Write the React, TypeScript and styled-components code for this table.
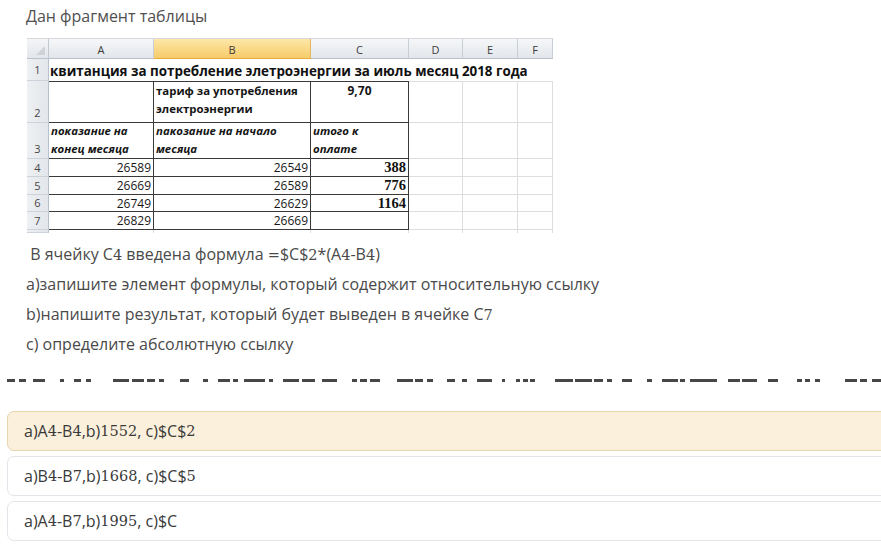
import React from "react";
import styled, { createGlobalStyle, css } from "styled-components";

const Global = createGlobalStyle`
  html, body { margin: 0; padding: 0; background: #fff; }
  body {
    width: 881px; height: 559px; overflow: hidden;
    font-family: "Open Sans", "Noto Sans", sans-serif;
  }
`;

const Page = styled.div`
  display: flex;
  flex-direction: column;
  padding-top: 1px;
`;

const Intro = styled.p`
  margin: 0 0 7px 26px;
  height: 30px;
  font-size: 16px;
  line-height: 30px;
  color: #505050;
`;

/* ---------- spreadsheet ---------- */
const Sheet = styled.div`
  margin-left: 27px;
  width: 526px;
  display: grid;
  grid-template-columns: 22px 105px 157px 98px 54px 55px 35px;
  grid-template-rows: 20px 22px 42px 36px 18px 18px 17px 18px 3px;
  border-top: 1px solid #d6d8db;
  font-family: "Open Sans", "Noto Sans", sans-serif;
  color: #151515;
  overflow: hidden;
`;

const Corner = styled.div`
  position: relative;
  background: linear-gradient(#f4f5f7, #e3e6ea);
  border-right: 1px solid #c3c9d1;
  border-bottom: 1px solid #b8c2ce;
  &::after {
    content: "";
    position: absolute;
    right: 3px;
    bottom: 3px;
    border-left: 9px solid transparent;
    border-bottom: 9px solid #cfd3d8;
  }
`;

const ColHead = styled.div<{ $active?: boolean }>`
  display: flex;
  align-items: center;
  justify-content: center;
  padding-top: 2px;
  box-sizing: border-box;
  font-size: 11px;
  color: #3c3c3c;
  background: linear-gradient(#f6f7f9, #e2e6ea);
  border-right: 1px solid #c8ced6;
  border-bottom: 1px solid #b8c2ce;
  ${(p) =>
    p.$active &&
    css`
      background: linear-gradient(#fde7a8, #f6cc6a);
      border-bottom: 1px solid #e9ad3c;
      border-right: 1px solid #e3b660;
    `}
`;

const RowHead = styled.div<{ $valign?: "center" | "end" }>`
  display: flex;
  justify-content: center;
  align-items: ${(p) => (p.$valign === "end" ? "flex-end" : "center")};
  font-size: 11px;
  line-height: 18px;
  color: #474747;
  background: linear-gradient(90deg, #eef0f3, #e3e6ea);
  border-right: 1px solid #b8c2ce;
  border-bottom: 1px solid #cdd3da;
`;

type CellProps = {
  $dark?: boolean;
  $top?: "dark" | "light";
  $noBottom?: boolean;
  $align?: "left" | "center" | "right";
  $valign?: "start" | "center" | "end";
};

const Cell = styled.div<CellProps>`
  box-sizing: border-box;
  display: flex;
  flex-direction: column;
  justify-content: ${(p) =>
    p.$valign === "start" ? "flex-start" : p.$valign === "end" ? "flex-end" : "center"};
  text-align: ${(p) => p.$align ?? "left"};
  padding: 0 2px;
  border-right: ${(p) => (p.$dark ? "1.5px solid #3a3a3a" : "1px solid #dcdee0")};
  border-bottom: ${(p) =>
    p.$noBottom ? "none" : p.$dark ? "1.5px solid #3a3a3a" : "1px solid #dcdee0"};
  border-top: ${(p) =>
    p.$top === "dark" ? "1.5px solid #3a3a3a" : p.$top === "light" ? "1px solid #dcdee0" : "none"};
  min-width: 0;
`;

const Title = styled.div`
  grid-column: 2 / span 6;
  display: flex;
  align-items: center;
  padding: 1px 0 0 1px;
  font-size: 13.4px;
  font-weight: 700;
  white-space: nowrap;
  color: #111;
`;

const HeadText = styled.div<{ $italic?: boolean }>`
  font-size: 11.4px;
  font-weight: 700;
  line-height: 18px;
  font-style: ${(p) => (p.$italic ? "italic" : "normal")};
  white-space: nowrap;
  color: #151515;
`;

const Rate = styled.div`
  font-size: 12px;
  font-weight: 700;
  line-height: 18px;
`;

const Reading = styled.div`
  font-size: 12px;
  line-height: 17px;
  color: #181818;
`;

const Total = styled.div`
  font-family: "Liberation Serif", "Times New Roman", serif;
  font-size: 14.5px;
  font-weight: 700;
  line-height: 17px;
  color: #111;
`;

/* ---------- question ---------- */
const Question = styled.div`
  margin: 6px 0 0 26px;
  display: flex;
  flex-direction: column;
  font-size: 16px;
  line-height: 30px;
  color: #4a4a4a;
`;

const Line = styled.p`
  margin: 0;
  height: 30px;
  white-space: nowrap;
`;

const Num = styled.span`
  font-family: "DejaVu Serif", "Liberation Serif", serif;
  font-size: 14.5px;
  line-height: 0;
`;

const Scribble = styled.svg`
  display: block;
  margin-top: 20px;
  width: 881px;
  height: 3px;
`;

/* ---------- answers ---------- */
const Answers = styled.div`
  margin: 29px -30px 0 7px;
  display: flex;
  flex-direction: column;
  gap: 5px;
`;

const Answer = styled.div<{ $picked?: boolean }>`
  box-sizing: border-box;
  height: 40px;
  display: flex;
  align-items: center;
  padding-left: 16px;
  border-radius: 7px;
  font-size: 16px;
  color: #3a3a3a;
  border: 1px solid ${(p) => (p.$picked ? "#e6d5ad" : "#e2e5e9")};
  background: ${(p) => (p.$picked ? "#faf0dc" : "#ffffff")};
`;

const Rich = ({ text }: { text: string }) => {
  const parts = text.split(/([0-9=]+)/);
  return (
    <>
      {parts.map((p, i) =>
        /^[0-9=]+$/.test(p) ? <Num key={i}>{p}</Num> : <React.Fragment key={i}>{p}</React.Fragment>
      )}
    </>
  );
};

const dashes: [number, number][] = [
  [7, 15], [19, 26], [33, 45], [60, 64], [74, 81], [86, 91], [113, 129], [132, 144], [147, 155],
  [159, 164], [180, 189], [203, 208], [218, 230], [233, 238], [244, 265], [269, 273], [283, 299],
  [302, 315], [322, 337], [352, 357], [360, 367], [370, 380], [397, 413], [415, 423], [427, 433],
  [447, 455], [462, 467], [477, 492], [502, 505], [516, 520], [523, 528], [530, 535], [555, 573],
  [575, 592], [594, 603], [607, 612], [622, 632], [647, 652], [662, 678], [680, 685], [690, 717],
  [728, 740], [742, 757], [768, 778], [797, 802], [805, 810], [815, 820], [845, 857], [860, 867],
  [872, 881],
];

const readings: [string, string, string][] = [
  ["26589", "26549", "388"],
  ["26669", "26589", "776"],
  ["26749", "26629", "1164"],
  ["26829", "26669", ""],
];

export default function App() {
  const cols = ["A", "B", "C", "D", "E", "F"];
  return (
    <>
      <Global />
      <Page>
        <Intro>Дан фрагмент таблицы</Intro>

        <Sheet>
          <Corner />
          {cols.map((c) => (
            <ColHead key={c} $active={c === "B"}>
              {c}
            </ColHead>
          ))}

          {/* row 1 */}
          <RowHead>1</RowHead>
          <Title>квитанция за потребление элетроэнергии за июль месяц 2018 года</Title>

          {/* row 2 */}
          <RowHead $valign="end">2</RowHead>
          <Cell $dark $top="dark" />
          <Cell $dark $top="dark" $valign="start">
            <HeadText>тариф за употребления</HeadText>
            <HeadText>электроэнергии</HeadText>
          </Cell>
          <Cell $dark $top="dark" $valign="start" $align="center">
            <Rate>9,70</Rate>
          </Cell>
          <Cell $top="light" />
          <Cell $top="light" />
          <Cell $top="light" />

          {/* row 3 */}
          <RowHead $valign="end">3</RowHead>
          <Cell $dark $valign="end">
            <HeadText $italic>показание на</HeadText>
            <HeadText $italic>конец месяца</HeadText>
          </Cell>
          <Cell $dark $valign="end">
            <HeadText $italic>пакозание на начало</HeadText>
            <HeadText $italic>месяца</HeadText>
          </Cell>
          <Cell $dark $valign="end">
            <HeadText $italic>итого к</HeadText>
            <HeadText $italic>оплате</HeadText>
          </Cell>
          <Cell />
          <Cell />
          <Cell />

          {/* rows 4-7 */}
          {readings.map(([a, b, c], i) => (
            <React.Fragment key={i}>
              <RowHead>{i + 4}</RowHead>
              <Cell $dark $align="right">
                <Reading>{a}</Reading>
              </Cell>
              <Cell $dark $align="right">
                <Reading>{b}</Reading>
              </Cell>
              <Cell $dark $align="right">
                <Total>{c}</Total>
              </Cell>
              <Cell />
              <Cell />
              <Cell />
            </React.Fragment>
          ))}

          {/* row 8 (cut) */}
          <RowHead />
          {cols.map((c) => (
            <Cell key={c} $noBottom />
          ))}
        </Sheet>

        <Question>
          <Line>
            <Rich text={"\u00A0В ячейку C4 введена формула =$C$2*(A4-B4)"} />
          </Line>
          <Line>а)запишите элемент формулы, который содержит относительную ссылку</Line>
          <Line>
            <Rich text="b)напишите результат, который будет выведен в ячейке C7" />
          </Line>
          <Line>с) определите абсолютную ссылку</Line>
        </Question>

        <Scribble viewBox="0 0 881 3" aria-hidden>
          {dashes.map(([x1, x2], i) => (
            <rect key={i} x={x1} y={0} width={x2 - x1} height={3} fill="#474747" />
          ))}
        </Scribble>

        <Answers>
          <Answer $picked>
            <Rich text="a)A4-B4,b)1552, c)$C$2" />
          </Answer>
          <Answer>
            <Rich text="a)B4-B7,b)1668, c)$C$5" />
          </Answer>
          <Answer>
            <Rich text="a)A4-B7,b)1995, c)$C" />
          </Answer>
        </Answers>
      </Page>
    </>
  );
}
